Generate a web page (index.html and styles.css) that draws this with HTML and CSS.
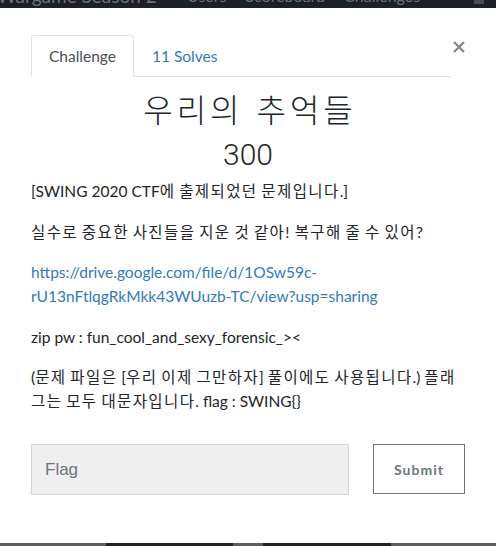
FILE: index.html
```html
<!DOCTYPE html>
<html lang="ko">
<head>
<meta charset="utf-8">
<link rel="stylesheet" href="styles.css">
</head>
<body>
<div class="topbar">
  <span class="brand">Wargame Season 2</span>
  <span class="navitem">Users</span>
  <span class="navitem">Scoreboard</span>
  <span class="navitem">Challenges</span>
  <span class="sq"></span>
</div>
<div class="modal">
  <div class="header">
    <ul class="tabs">
      <li class="tab active">Challenge</li>
      <li class="tab"><a href="#">11 Solves</a></li>
    </ul>
    <span class="close" aria-label="Close">
      <svg width="12" height="12" viewBox="0 0 12 12"><path d="M1 1 L11 11 M11 1 L1 11" stroke="#858585" stroke-width="2.2" fill="none"/></svg>
    </span>
  </div>
  <h2 class="title">우리의 추억들</h2>
  <h3 class="value">300</h3>
  <div class="desc">
    <p>[SWING 2020 CTF<span class="ko">에 출제되었던 문제입니다</span>.]</p>
    <p><span class="ko">실수로 중요한 사진들을 지운 것 같아! 복구해 줄 수 있어?</span></p>
    <p><a href="#">https://drive.google.com/file/d/1OSw59c-rU13nFtlqgRkMkk43WUuzb-TC/view?usp=sharing</a></p>
    <p>zip pw : fun_cool_and_sexy_forensic_&gt;&lt;</p>
    <p>(<span class="ko">문제 파일은</span> [<span class="ko">우리 이제 그만하자</span>] <span class="ko">풀이에도 사용됩니다</span>.) <span class="ko">플래그는 모두 대문자입니다</span>. flag : SWING{}</p>
  </div>
  <div class="form">
    <input class="flag" type="text" placeholder="Flag">
    <button class="submit">Submit</button>
  </div>
</div>
<div class="bottombar">
  <span class="seg seg1"></span>
  <span class="seg seg2"></span>
</div>
</body>
</html>
```
FILE: styles.css
```css
html, body {
  margin: 0;
  padding: 0;
  background: #fff;
}
body {
  width: 496px;
  height: 546px;
  overflow: hidden;
  font-family: "Lato", "Noto Sans CJK KR", sans-serif;
  color: #212529;
  display: flex;
  flex-direction: column;
}
.topbar {
  height: 8px;
  flex: none;
  background: #1d2024;
  display: flex;
  align-items: flex-end;
  overflow: hidden;
  color: #6e7176;
  line-height: 24px;
  white-space: nowrap;
}
.brand {
  font-size: 19px;
  margin-left: -3px;
  width: 190px;
}
.navitem {
  font-size: 16px;
  margin-right: 19px;
}
.sq {
  margin-left: auto;
  margin-right: 12px;
  width: 10px;
  height: 4px;
  background: #4a4c50;
  align-self: flex-start;
}
.modal {
  flex: 1;
  padding: 27px 31px 0 31px;
}
.header {
  display: flex;
  align-items: flex-start;
}
.tabs {
  list-style: none;
  margin: 0;
  padding: 0;
  flex: 1;
  display: flex;
  border-bottom: 1px solid #dee2e6;
}
.tab {
  padding: 0 17px;
  height: 40px;
  line-height: 40px;
  font-size: 15.5px;
  color: #495057;
  border: 1px solid transparent;
  border-top-left-radius: 4px;
  border-top-right-radius: 4px;
  margin-bottom: -1px;
}
.tab.active {
  border-color: #dee2e6 #dee2e6 #fff;
}
.tab a {
  color: #337ab7;
  text-decoration: none;
}
.close {
  width: 14px;
  display: flex;
  justify-content: flex-end;
  margin-top: 6px;
}
.title {
  margin: 12px 0 0;
  padding-left: 4px;
  text-align: center;
  font-family: "Noto Sans CJK KR", sans-serif;
  font-weight: 300;
  font-size: 32px;
  line-height: 38px;
  letter-spacing: 4px;
  color: #212529;
}
.value {
  margin: 10px 0 0;
  text-align: center;
  font-family: "Roboto", "Liberation Sans", sans-serif;
  font-weight: 300;
  font-size: 30px;
  line-height: 36px;
  color: #212529;
}
.desc {
  margin-top: 6px;
  font-size: 15.5px;
  line-height: 24px;
}
.desc p {
  margin: 0 0 16.5px;
}
.ko {
  letter-spacing: 1.4px;
  word-spacing: -1.5px;
}
.desc a {
  color: #337ab7;
  text-decoration: none;
  word-break: break-word;
}
.form {
  display: flex;
  align-items: flex-start;
  margin-top: 31px;
  gap: 24px;
}
.flag {
  width: 318px;
  height: 51px;
  box-sizing: border-box;
  background: #efefef;
  border: 1px solid #d3d6da;
  padding: 0 13px;
  font-family: "Liberation Sans", sans-serif;
  font-size: 17px;
  color: #495057;
  outline: none;
}
.flag::placeholder {
  color: #6c757d;
}
.submit {
  width: 92px;
  height: 50px;
  box-sizing: border-box;
  background: #fff;
  border: 1.5px solid #6c757d;
  font-family: "Lato", sans-serif;
  font-weight: 700;
  font-size: 14px;
  letter-spacing: 1px;
  color: #6c757d;
}
.bottombar {
  height: 3px;
  flex: none;
  margin-top: auto;
  background: #5e5e5e;
  display: flex;
}
.seg {
  background: #222;
  height: 3px;
}
.seg1 {
  margin-left: 106px;
  width: 127px;
}
.seg2 {
  margin-left: 30px;
  width: 128px;
}
```
